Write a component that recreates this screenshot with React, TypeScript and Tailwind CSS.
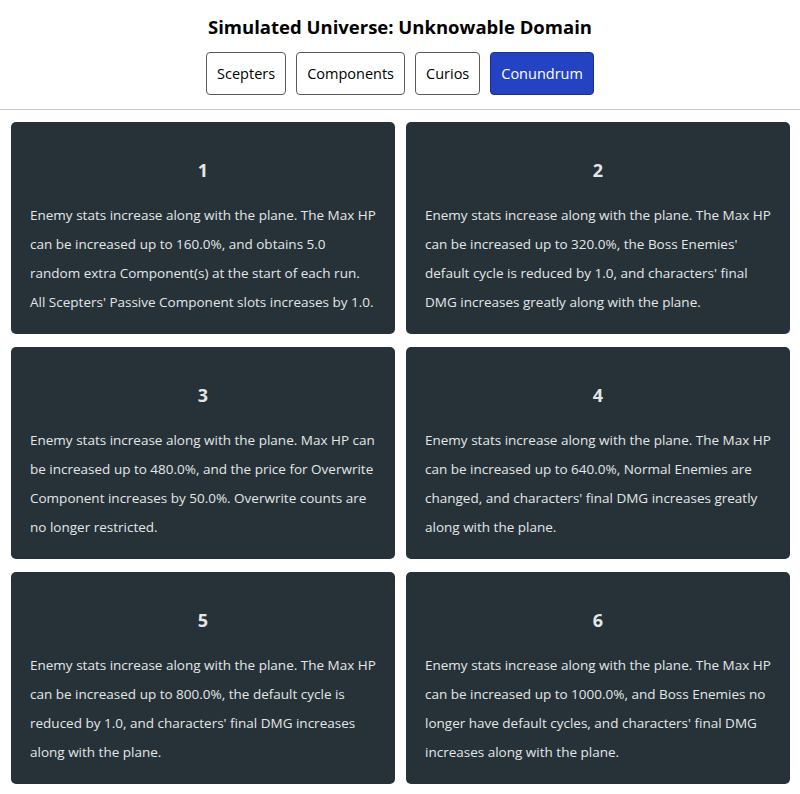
import * as React from "react"

const tabs = ["Scepters", "Components", "Curios", "Conundrum"]

const levels = [
  {
    id: 1,
    text: "Enemy stats increase along with the plane. The Max HP can be increased up to 160.0%, and obtains 5.0 random extra Component(s) at the start of each run. All Scepters' Passive Component slots increases by 1.0.",
  },
  {
    id: 2,
    text: "Enemy stats increase along with the plane. The Max HP can be increased up to 320.0%, the Boss Enemies' default cycle is reduced by 1.0, and characters' final DMG increases greatly along with the plane.",
  },
  {
    id: 3,
    text: "Enemy stats increase along with the plane. Max HP can be increased up to 480.0%, and the price for Overwrite Component increases by 50.0%. Overwrite counts are no longer restricted.",
  },
  {
    id: 4,
    text: "Enemy stats increase along with the plane. The Max HP can be increased up to 640.0%, Normal Enemies are changed, and characters' final DMG increases greatly along with the plane.",
  },
  {
    id: 5,
    text: "Enemy stats increase along with the plane. The Max HP can be increased up to 800.0%, the default cycle is reduced by 1.0, and characters' final DMG increases along with the plane.",
  },
  {
    id: 6,
    text: "Enemy stats increase along with the plane. The Max HP can be increased up to 1000.0%, and Boss Enemies no longer have default cycles, and characters' final DMG increases along with the plane.",
  },
]

export default function App() {
  const [active, setActive] = React.useState("Conundrum")

  return (
    <div className="min-h-[794px] bg-white font-['Segoe_UI','Open_Sans',sans-serif]">
      <header className="border-b border-[#c4c4c4] pt-[15px] pb-[14px]">
        <h1 className="text-center text-[18.5px] leading-[24px] font-bold text-black">
          Simulated Universe: Unknowable Domain
        </h1>
        <div className="mt-[13px] flex justify-center gap-[10px]">
          {tabs.map(tab => (
            <button
              key={tab}
              onClick={() => setActive(tab)}
              className={
                tab === active
                  ? "h-[43px] rounded-[4px] border border-[#1c2f8c] bg-[#2443c3] px-[10px] text-[14.5px] text-white"
                  : "h-[43px] rounded-[4px] border border-[#5a5a5a] bg-white px-[10px] text-[14.5px] text-black"
              }
            >
              {tab}
            </button>
          ))}
        </div>
      </header>

      <main className="grid grid-cols-2 gap-x-[11px] gap-y-[13px] pl-[11px] pr-[10px] pt-[12px] pb-[11px]">
        {levels.map(level => (
          <div key={level.id} className="h-[212px] rounded-[5px] bg-[#263238] px-[19px] pt-[20px] text-[#e4e6e7]">
            <h3 className="mt-[17px] text-center text-[18px] leading-[22px] font-bold">{level.id}</h3>
            <p className="mt-[20px] text-[13.5px] leading-[29px]">{level.text}</p>
          </div>
        ))}
      </main>
    </div>
  )
}
